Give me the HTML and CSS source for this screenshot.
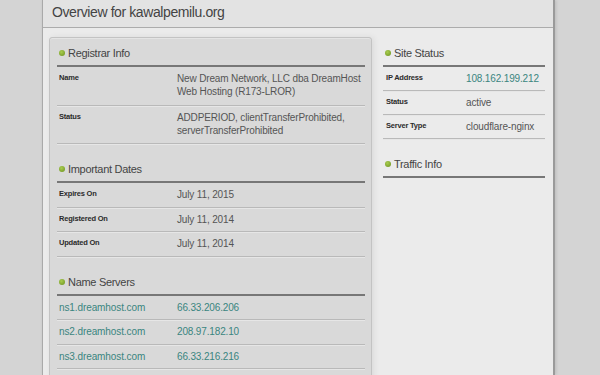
FILE: index.html
```html
<!DOCTYPE html>
<html lang="en">
<head>
    <meta charset="UTF-8">
    <meta name="viewport" content="width=device-width, initial-scale=1.0">
    <title>Overview for kawalpemilu.org</title>
    <link rel="stylesheet" href="styles.css">
</head>
<body>
    <div class="panel">
        <div class="panel-header">
            <h1 class="title">Overview for kawalpemilu.org</h1>
        </div>
        <div class="panel-body">
            <div class="card">
                <div class="section">
                    <h3 class="section-title"><span class="dot"></span>Registrar Info</h3>
                    <div class="row row-wrap">
                        <span class="label">Name</span>
                        <span class="value">New Dream Network, LLC dba DreamHost Web Hosting (R173-LROR)</span>
                    </div>
                    <div class="row row-wrap">
                        <span class="label">Status</span>
                        <span class="value">ADDPERIOD, clientTransferProhibited, serverTransferProhibited</span>
                    </div>
                </div>
                <div class="section">
                    <h3 class="section-title"><span class="dot"></span>Important Dates</h3>
                    <div class="row">
                        <span class="label">Expires On</span>
                        <span class="value">July 11, 2015</span>
                    </div>
                    <div class="row">
                        <span class="label">Registered On</span>
                        <span class="value">July 11, 2014</span>
                    </div>
                    <div class="row">
                        <span class="label">Updated On</span>
                        <span class="value">July 11, 2014</span>
                    </div>
                </div>
                <div class="section">
                    <h3 class="section-title"><span class="dot"></span>Name Servers</h3>
                    <div class="row">
                        <a href="#" class="host">ns1.dreamhost.com</a>
                        <a href="#" class="value link">66.33.206.206</a>
                    </div>
                    <div class="row">
                        <a href="#" class="host">ns2.dreamhost.com</a>
                        <a href="#" class="value link">208.97.182.10</a>
                    </div>
                    <div class="row">
                        <a href="#" class="host">ns3.dreamhost.com</a>
                        <a href="#" class="value link">66.33.216.216</a>
                    </div>
                </div>
            </div>
            <div class="side">
                <div class="section">
                    <h3 class="section-title"><span class="dot"></span>Site Status</h3>
                    <div class="row">
                        <span class="label">IP Address</span>
                        <a href="#" class="value link">108.162.199.212</a>
                    </div>
                    <div class="row">
                        <span class="label">Status</span>
                        <span class="value">active</span>
                    </div>
                    <div class="row">
                        <span class="label">Server Type</span>
                        <span class="value">cloudflare-nginx</span>
                    </div>
                </div>
                <div class="section">
                    <h3 class="section-title"><span class="dot"></span>Traffic Info</h3>
                </div>
            </div>
        </div>
    </div>
</body>
</html>
```

FILE: styles.css
```css
body {
    font-family: "Liberation Sans", Arial, sans-serif;
    background-color: #d4d4d4;
    margin: 0;
    padding: 0;
}
.panel {
    width: 510px;
    height: 375px;
    overflow: hidden;
    margin-left: 42px;
    background-color: #ebebeb;
    border-left: 1px solid #a9a9a9;
    border-right: 2px solid #9a9a9a;
    box-shadow: 1px 0 3px rgba(0, 0, 0, 0.12);
}
.panel-header {
    background-color: #e3e3e3;
    height: 24px;
    padding: 0 9px 3px;
    border-bottom: 1px solid #acacac;
}
.title {
    margin: 0;
    font-size: 14px;
    line-height: 24px;
    font-weight: normal;
    color: #444;
    letter-spacing: -0.4px;
}
.panel-body {
    display: flex;
    gap: 11px;
    padding: 9px 8px 0 6px;
}
.card {
    width: 308px;
    min-height: 360px;
    padding: 0 6px 0 7px;
    background-color: #d9d9d9;
    border: 1px solid #c3c3c3;
    border-radius: 3px;
    box-shadow: 2px 0 6px rgba(0, 0, 0, 0.07), inset 0 1px 0 #e4e4e4;
}
.side {
    width: 162px;
    padding-top: 1px;
}
.section + .section {
    margin-top: 10px;
}
.section-title {
    margin: 0;
    padding: 8px 0 5px 2px;
    font-size: 11px;
    line-height: 14px;
    font-weight: normal;
    color: #444;
    letter-spacing: -0.3px;
    border-bottom: 2px solid #777;
}
.dot {
    display: inline-block;
    width: 6px;
    height: 6px;
    margin-right: 3px;
    border-radius: 50%;
    background: radial-gradient(circle at 40% 35%, #a8cc4e, #6b9120);
    vertical-align: 1px;
}
.row {
    display: flex;
    padding: 5px 0;
    line-height: 13px;
    border-bottom: 1px solid #b9b9b9;
    box-shadow: 0 1px 0 #e6e6e6;
}
.card .row {
    padding-bottom: 5.5px;
}
.card .row-wrap {
    padding-bottom: 6.5px;
}
.label {
    flex: 0 0 118px;
    padding-left: 2px;
    font-size: 7.5px;
    line-height: 11px;
    font-weight: bold;
    color: #2a2a2a;
    letter-spacing: -0.2px;
}
.side .label {
    flex: 0 0 80px;
    padding-left: 3px;
}
.value {
    flex: 1;
    font-size: 10px;
    color: #555;
    letter-spacing: -0.15px;
}
.host {
    flex: 0 0 118px;
    padding-left: 2px;
    font-size: 10px;
    color: #3a8580;
    text-decoration: none;
    letter-spacing: -0.1px;
}
.link {
    color: #3a8580;
    text-decoration: none;
}
```
